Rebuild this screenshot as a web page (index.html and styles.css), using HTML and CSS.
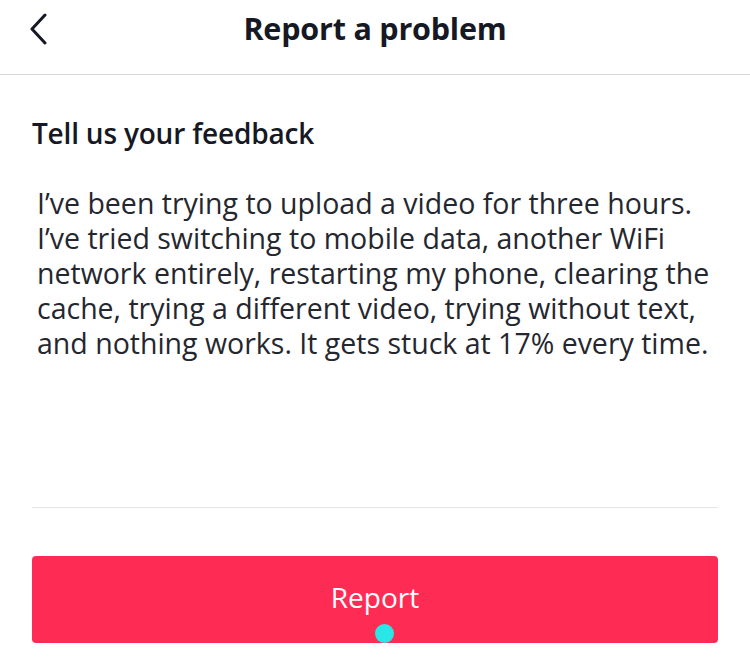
FILE: index.html
```html
<!DOCTYPE html>
<html lang="en">
<head>
  <meta charset="UTF-8">
  <title>Report a problem</title>
  <meta name="viewport" content="width=device-width, initial-scale=1.0">
  <link rel="stylesheet" href="styles.css">
</head>
<body>
<header class="topbar">
  <button class="back" aria-label="Back">
    <svg width="20" height="32" viewBox="0 0 20 32"><path d="M17 2 L4 16 L17 30" fill="none" stroke="#161823" stroke-width="3" stroke-linecap="round" stroke-linejoin="round"/></svg>
  </button>
  <h1>Report a problem</h1>
</header>
<main class="content">
  <h2>Tell us your feedback</h2>
  <div class="feedback">I’ve been trying to upload a video for three hours.<br>I’ve tried switching to mobile data, another WiFi<br>network entirely, restarting my phone, clearing the<br>cache, trying a different video, trying without text,<br>and nothing works. It gets stuck at 17% every time.</div>
  <div class="divider"></div>
  <button class="report">Report<span class="touch"></span></button>
</main>
</body>
</html>
```

FILE: styles.css
```css
body {
  margin: 0;
  font-family: "Open Sans", "Liberation Sans", sans-serif;
  background: #fff;
  color: #161823;
}
.topbar {
  height: 74px;
  border-bottom: 1px solid #d6d6d8;
  display: flex;
  align-items: center;
  justify-content: center;
  position: relative;
}
.back {
  position: absolute;
  left: 28px;
  top: 13px;
  background: none;
  border: none;
  padding: 0;
}
.topbar h1 {
  margin: 0 0 18px;
  font-size: 30.5px;
  font-weight: 700;
  letter-spacing: -0.2px;
}
.content {
  padding: 0 32px;
}
.content h2 {
  margin: 42px 0 0;
  font-size: 28px;
  font-weight: 600;
  line-height: 32px;
  letter-spacing: -0.2px;
}
.feedback {
  margin: 37px 0 0 5px;
  height: 321px;
  font-size: 28.5px;
  line-height: 35px;
  color: #25272f;
  white-space: nowrap;
}
.divider {
  height: 1px;
  background: #e6e6e8;
}
.report {
  position: relative;
  overflow: hidden;
  display: block;
  width: 100%;
  height: 87px;
  margin-top: 48px;
  border: none;
  border-radius: 4px;
  background: #fe2c55;
  color: #fff;
  font-family: "Open Sans", "Liberation Sans", sans-serif;
  font-size: 28px;
  padding: 0 0 6px;
}
.touch {
  position: absolute;
  left: 343px;
  bottom: 0;
  width: 19px;
  height: 19px;
  border-radius: 50%;
  background: #2ae6e6;
}
```
